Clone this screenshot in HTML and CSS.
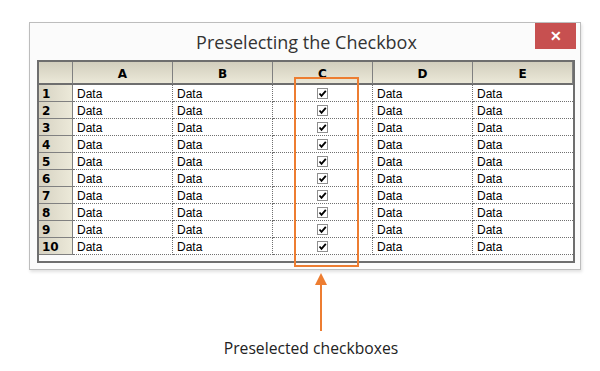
FILE: index.html
```html
<!DOCTYPE html>
<html lang="en">
<head>
    <meta charset="UTF-8">
    <title>Preselecting the Checkbox</title>
    <link rel="stylesheet" href="styles.css">
</head>
<body>

<div class="window">
    <div class="title-bar">
        <span></span>
        <span class="title">Preselecting the Checkbox</span>
        <button class="close-btn">&#10005;</button>
    </div>

    <div class="grid-wrap">
        <div class="grid" id="grid">
            <div class="col-head corner"></div>
            <div class="col-head">A</div>
            <div class="col-head">B</div>
            <div class="col-head">C</div>
            <div class="col-head">D</div>
            <div class="col-head">E</div>
        </div>
        <div class="highlight"></div>
    </div>
</div>

<div class="note">
    <svg class="arrow" width="14" height="60" viewBox="0 0 14 60">
        <line x1="7" y1="10" x2="7" y2="58" stroke="#ed7d31" stroke-width="2"/>
        <polygon points="7,0 1,12 13,12" fill="#ed7d31"/>
    </svg>
    <div class="note-text">Preselected checkboxes</div>
</div>

<script>
    var grid = document.getElementById('grid');
    var check = '<span class="checkbox"><svg width="9" height="9" viewBox="0 0 9 9">' +
        '<path d="M1.5 4.5 L3.5 6.8 L7.8 1.8" fill="none" stroke="#000" stroke-width="1.8"/></svg></span>';

    for (var r = 1; r <= 10; r++) {
        var html = '<div class="row-head">' + r + '</div>';
        html += '<div class="cell">Data</div>';
        html += '<div class="cell">Data</div>';
        html += '<div class="cell center">' + check + '</div>';
        html += '<div class="cell">Data</div>';
        html += '<div class="cell last">Data</div>';
        grid.insertAdjacentHTML('beforeend', html);
    }
</script>

</body>
</html>
```

FILE: styles.css
```css
body {
    margin: 0;
    background-color: #fff;
    font-family: 'Liberation Sans', Arial, sans-serif;
}

.window {
    box-sizing: border-box;
    width: 552px;
    height: 248px;
    margin: 22px 0 0 29px;
    background-color: #fbfbfb;
    border: 1px solid #bdbdbd;
    box-shadow: 1px 2px 3px rgba(0, 0, 0, 0.12);
}

.title-bar {
    display: grid;
    grid-template-columns: 1fr auto 1fr;
    align-items: start;
    height: 37px;
    padding: 0 4px 0 7px;
}

.title {
    font-family: 'Open Sans', sans-serif;
    font-size: 18px;
    color: #333;
    line-height: 38px;
}

.close-btn {
    justify-self: end;
    width: 41px;
    height: 26px;
    border: none;
    padding: 0;
    background-color: #c75050;
    color: #fff;
    font-size: 14px;
    font-weight: bold;
    line-height: 26px;
}

.grid-wrap {
    position: relative;
    margin-left: 7px;
}

.grid {
    box-sizing: border-box;
    width: 538px;
    height: 203px;
    display: grid;
    grid-template-columns: 34px repeat(5, 100px);
    grid-template-rows: 23px repeat(10, 17px);
    border: 2px solid #6e6e6e;
    background-color: #fbfbfb;
    font-size: 12px;
}

.col-head {
    box-sizing: border-box;
    border-right: 1px solid #808080;
    border-bottom: 2px solid #6e6e6e;
    background: linear-gradient(#d2cebd, #ebe8d8);
    font-family: 'DejaVu Sans', Verdana, sans-serif;
    font-weight: bold;
    font-size: 12px;
    text-align: center;
    line-height: 24px;
    color: #000;
}

.col-head:last-child {
    border-right: none;
}

.row-head {
    box-sizing: border-box;
    border-right: 1px solid #808080;
    border-bottom: 1px solid #808080;
    background: linear-gradient(90deg, #d6d2c2, #ece9d9);
    font-family: 'DejaVu Sans', Verdana, sans-serif;
    font-weight: bold;
    font-size: 12px;
    line-height: 15px;
    padding: 2px 0 0 3px;
    color: #000;
}

.cell {
    box-sizing: border-box;
    background-color: #fff;
    border-right: 1px dotted #707070;
    border-bottom: 1px dotted #707070;
    line-height: 15px;
    padding: 2px 0 0 4px;
    color: #000;
}

.cell.last {
    border-right: none;
}

.cell.center {
    display: flex;
    justify-content: center;
    align-items: center;
    padding: 0;
}

.checkbox {
    box-sizing: border-box;
    width: 11px;
    height: 11px;
    border: 1px solid #8f8f8f;
    background-color: #fff;
    display: flex;
    justify-content: center;
    align-items: center;
}

.highlight {
    position: absolute;
    left: 257px;
    top: 17px;
    width: 61px;
    height: 186px;
    border: 2px solid #ed7d31;
}

.note {
    display: flex;
    flex-direction: column;
    align-items: center;
    width: 300px;
    margin: 3px 0 0 171px;
}

.arrow {
    display: block;
}

.note-text {
    margin: 4px 20px 0 0;
    font-family: 'Open Sans', sans-serif;
    font-size: 15.7px;
    color: #222;
}
```
